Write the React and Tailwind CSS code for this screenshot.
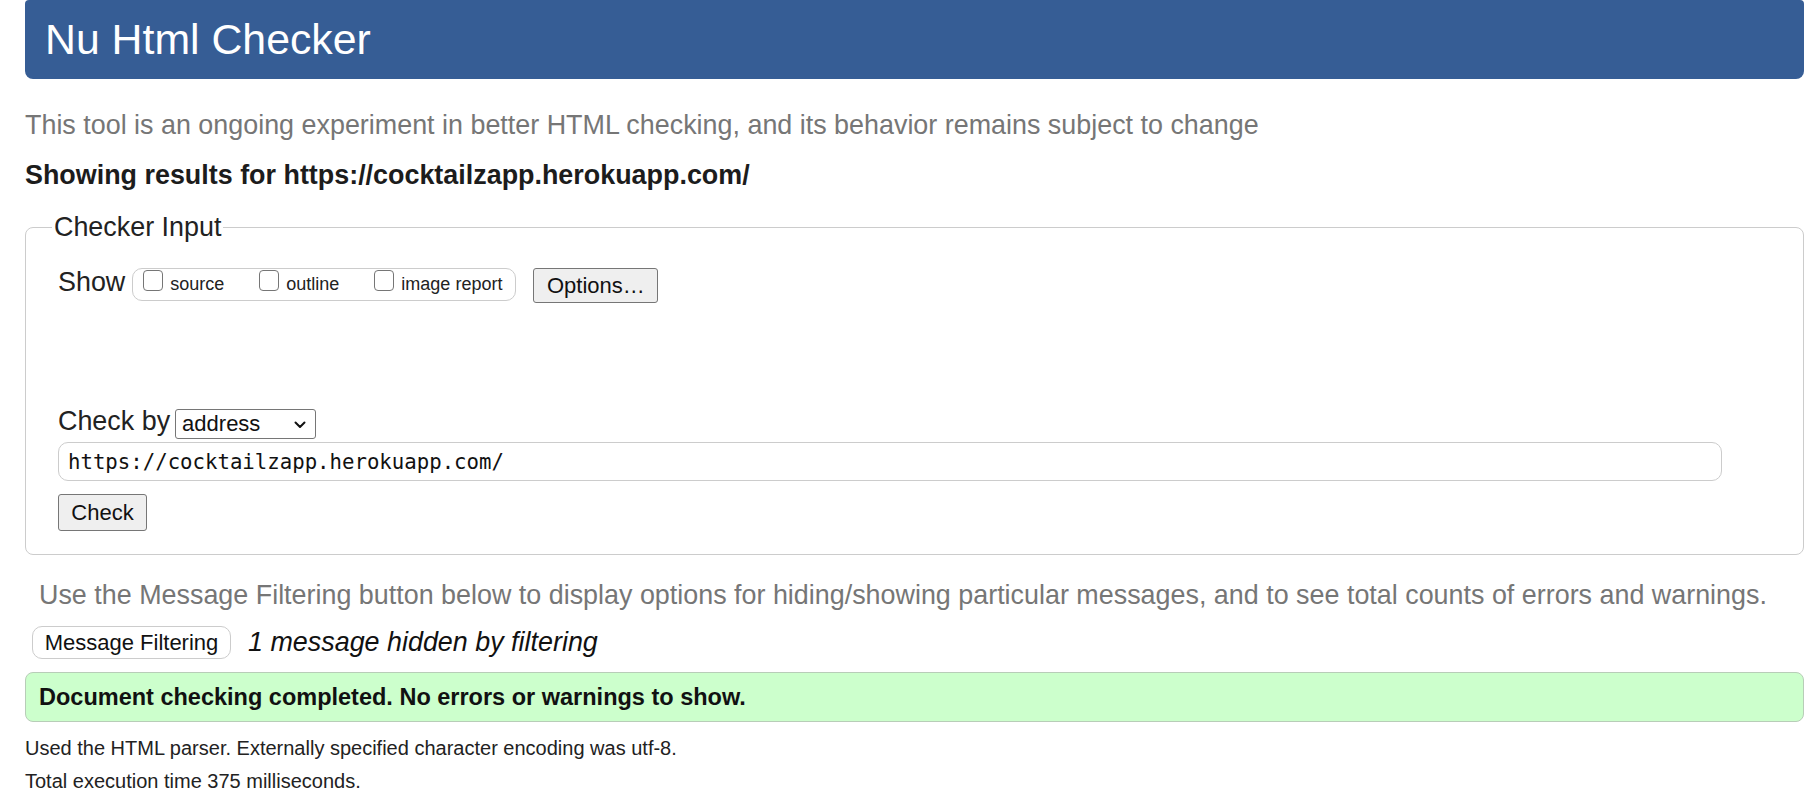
import React from "react";

function Checkbox() {
  return (
    <input
      type="checkbox"
      className="appearance-none block w-[20px] h-[21px] shrink-0 border border-[#767676] rounded-[4px] bg-white mt-[1px]"
    />
  );
}

export default function App() {
  return (
    <div
      className="min-h-[802px] bg-white text-[#222222]"
      style={{ fontFamily: '"Liberation Sans", Arial, sans-serif' }}
    >
      <div className="ml-[25px] w-[1779px]">
        <div className="h-[79px] bg-[#365d95] rounded-b-[8px] rounded-t-[4px] pl-[20px] flex items-center">
          <h1 className="text-white text-[42.8px] leading-[79px] font-normal">Nu Html Checker</h1>
        </div>

        <p className="mt-[30px] text-[26.9px] leading-[32px] text-[#767676]">
          This tool is an ongoing experiment in better HTML checking, and its behavior remains subject to change
        </p>
        <p className="mt-[18px] text-[26.9px] leading-[32px] font-bold text-[#1c1c1c]">
          Showing results for https://cocktailzapp.herokuapp.com/
        </p>

        <fieldset className="mt-[20px] border border-[#cccccc] rounded-[8px] pl-[32px] pr-[20px] pt-[25px] pb-[23px]">
          <legend className="ml-[-6px] px-[2px] text-[26.9px] leading-[32px]">Checker Input</legend>

          <div className="flex items-start">
            <span className="text-[26.9px] leading-[29px]">Show</span>
            <div className="ml-[7px] h-[33px] border border-[#cccccc] rounded-[10px] pl-[10px] pr-[13px] flex items-start">
              <label className="flex items-start">
                <Checkbox />
                <span className="ml-[7px] text-[18px] leading-[31px]">source</span>
              </label>
              <label className="ml-[35px] flex items-start">
                <Checkbox />
                <span className="ml-[7px] text-[18px] leading-[31px]">outline</span>
              </label>
              <label className="ml-[35px] flex items-start">
                <Checkbox />
                <span className="ml-[7px] text-[18px] leading-[31px]">image report</span>
              </label>
            </div>
            <button className="ml-[17px] h-[35px] w-[125px] bg-[#efefef] border border-[#767676] rounded-[3px] text-[22px] leading-[33px] text-[#111111]">
              Options…
            </button>
          </div>

          <div className="mt-[106px] flex items-start">
            <span className="text-[26.9px] leading-[25px]">Check by</span>
            <div className="ml-[5px] h-[30px] w-[141px] border border-[#767676] rounded-[3px] bg-white flex items-center justify-between pl-[6px] pr-[9px]">
              <span className="text-[22px] leading-[28px] text-[#111111]">address</span>
              <svg width="12" height="8" viewBox="0 0 12 8" className="mt-[2px]">
                <polyline points="1.5,1.5 6,6 10.5,1.5" fill="none" stroke="#111111" strokeWidth="2" strokeLinecap="round" strokeLinejoin="round" />
              </svg>
            </div>
          </div>

          <div className="mt-[3px] h-[39px] w-[1664px] border border-[#cccccc] rounded-[10px] bg-white pl-[9px] flex items-center">
            <span
              className="text-[20.7px] leading-[24px] text-[#111111]"
              style={{ fontFamily: '"DejaVu Sans Mono", "Liberation Mono", monospace' }}
            >
              https://cocktailzapp.herokuapp.com/
            </span>
          </div>

          <button className="mt-[13px] block h-[37px] w-[89px] bg-[#efefef] border border-[#767676] rounded-[3px] text-[22px] leading-[35px] text-[#111111]">
            Check
          </button>
        </fieldset>

        <p className="mt-[24px] pl-[14px] text-[26.9px] leading-[32px] text-[#767676]">
          Use the Message Filtering button below to display options for hiding/showing particular messages, and to see total counts of errors and warnings.
        </p>

        <div className="mt-[15px] ml-[7px] flex items-center">
          <button className="h-[33px] w-[199px] border border-[#cccccc] rounded-[10px] bg-white text-[22px] leading-[31px] text-[#111111]">
            Message Filtering
          </button>
          <span className="ml-[17px] text-[26.9px] leading-[33px] italic text-[#111111]">1 message hidden by filtering</span>
        </div>

        <div className="mt-[13px] h-[50px] border border-[#b8cdb8] rounded-[8px] bg-[#ccffcc] pl-[13px] flex items-center">
          <span className="text-[23.5px] leading-[30px] font-bold text-[#111111]">
            Document checking completed. No errors or warnings to show.
          </span>
        </div>

        <p className="mt-[14px] text-[20px] leading-[24px] text-[#222222]">
          Used the HTML parser. Externally specified character encoding was utf-8.
        </p>
        <p className="mt-[9px] text-[20px] leading-[24px] text-[#222222]">Total execution time 375 milliseconds.</p>
      </div>
    </div>
  );
}
